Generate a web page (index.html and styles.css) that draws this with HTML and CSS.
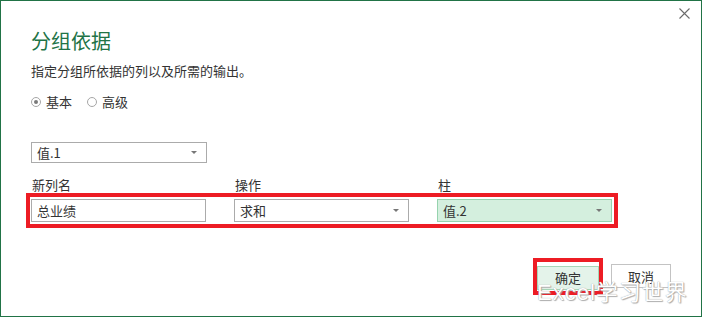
FILE: index.html
```html
<!DOCTYPE html>
<html lang="zh-CN">
<head>
    <meta charset="UTF-8">
    <title>分组依据</title>
    <link rel="stylesheet" href="styles.css">
</head>
<body>

<div class="dialog">
    <div class="topbar">
        <svg class="close" width="11" height="11" viewBox="0 0 11 11">
            <path d="M0.5 0.5 L10.5 10.5 M10.5 0.5 L0.5 10.5" stroke="#6b6b6b" stroke-width="1.1" fill="none"/>
        </svg>
    </div>

    <div class="content">
        <h1 class="title">分组依据</h1>
        <p class="subtitle">指定分组所依据的列以及所需的输出。</p>

        <div class="radios">
            <label class="radio"><span class="dot checked"></span>基本</label>
            <label class="radio"><span class="dot"></span>高级</label>
        </div>

        <div class="combo first">
            <span>值.1</span>
            <span class="arrow"></span>
        </div>

        <div class="grid labels">
            <div>新列名</div>
            <div>操作</div>
            <div>柱</div>
        </div>

        <div class="grid row mark">
            <div class="field">总业绩</div>
            <div class="combo">
                <span>求和</span>
                <span class="arrow"></span>
            </div>
            <div class="combo active">
                <span>值.2</span>
                <span class="arrow"></span>
            </div>
        </div>
    </div>

    <div class="footer">
        <div class="mark ok-mark">
            <button class="btn ok">确定</button>
        </div>
        <button class="btn">取消</button>
    </div>

    <div class="watermark">Excel学习世界</div>
</div>

</body>
</html>
```

FILE: styles.css
```css
body {
    margin: 0;
    background: #ffffff;
    font-family: "Noto Sans CJK SC", "Noto Sans", sans-serif;
    color: #333333;
}
.dialog {
    position: relative;
    width: 702px;
    height: 317px;
    box-sizing: border-box;
    border: 1px solid #217346;
    background: #ffffff;
    overflow: hidden;
}
.topbar {
    height: 26px;
    display: flex;
    justify-content: flex-end;
    align-items: flex-start;
    padding-top: 7px;
    padding-right: 11px;
    box-sizing: border-box;
}
.content {
    padding-left: 30px;
}
.title {
    margin: 0;
    font-size: 20px;
    font-weight: normal;
    line-height: 28px;
    color: #217346;
}
.subtitle {
    margin: 7px 0 0;
    font-size: 13px;
    line-height: 18px;
}
.radios {
    display: flex;
    gap: 15px;
    margin-top: 14px;
    font-size: 13px;
    line-height: 16px;
}
.radio {
    display: flex;
    align-items: center;
    gap: 5px;
}
.dot {
    width: 10px;
    height: 10px;
    box-sizing: border-box;
    border: 1px solid #a6a6a6;
    border-radius: 50%;
    display: flex;
    align-items: center;
    justify-content: center;
}
.dot.checked::after {
    content: "";
    width: 4px;
    height: 4px;
    border-radius: 50%;
    background: #7a7a7a;
}
.combo, .field {
    box-sizing: border-box;
    height: 23px;
    border: 1px solid #ababab;
    background: #ffffff;
    display: flex;
    align-items: center;
    justify-content: space-between;
    padding: 0 9px 0 5px;
    font-size: 13px;
}
.combo.first {
    width: 176px;
    height: 21px;
    margin-top: 32px;
}
.arrow {
    width: 0;
    height: 0;
    border-left: 3px solid transparent;
    border-right: 3px solid transparent;
    border-top: 3px solid #777777;
}
.grid {
    display: grid;
    grid-template-columns: 175px 175px 175px;
    column-gap: 28px;
}
.labels {
    margin-top: 14px;
    font-size: 13px;
    line-height: 16px;
}
.labels div {
    padding-left: 1px;
}
.mark {
    border: 4px solid #ed1c24;
}
.row {
    width: fit-content;
    margin-left: -5px;
    padding: 2px 2px 2px 1px;
}
.combo.active {
    background: #d4efde;
    border-color: #96d3ae;
}
.footer {
    display: flex;
    justify-content: flex-end;
    align-items: flex-start;
    gap: 8px;
    margin-top: 30px;
    padding-right: 30px;
}
.ok-mark {
    padding: 2px 0 1px;
}
.btn {
    width: 60px;
    height: 24px;
    margin-top: 6px;
    box-sizing: border-box;
    border: 1px solid #c3c3c3;
    background: #ffffff;
    font-family: inherit;
    font-size: 13px;
    color: #333333;
    padding: 0;
}
.btn.ok {
    width: 62px;
    margin-top: 0;
    background: #e4f3ea;
    border-color: #a6d6b7;
}
.watermark {
    position: absolute;
    left: 536px;
    top: 277px;
    font-family: "Liberation Sans", "Noto Sans CJK SC", sans-serif;
    font-size: 22px;
    line-height: 30px;
    letter-spacing: 1px;
    color: #ffffff;
    text-shadow: 0 0 1px #8a8a8a, 1px 1px 1px #b0b0b0;
}
```
